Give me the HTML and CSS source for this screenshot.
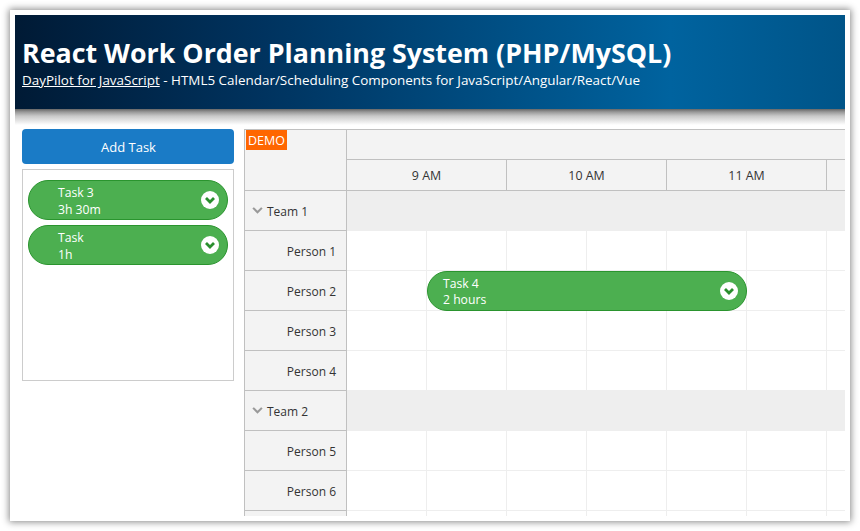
FILE: index.html
```html
<!DOCTYPE html>
<html lang="en">
<head>
<meta charset="utf-8">
<title>React Work Order Planning System (PHP/MySQL)</title>
<link rel="stylesheet" href="styles.css">
</head>
<body>
<div class="window">
  <header class="banner">
    <h1 class="title">React Work Order Planning System (PHP/MySQL)</h1>
    <p class="subtitle"><a class="link" href="#">DayPilot for JavaScript</a> - HTML5 Calendar/Scheduling Components for JavaScript/Angular/React/Vue</p>
  </header>
  <main class="main">
    <aside class="side">
      <button class="add">Add Task</button>
      <div class="queue">
        <div class="task queue-task">
          <div class="task-text"><div>Task 3</div><div>3h 30m</div></div>
          <svg class="chev" viewBox="0 0 18 18"><circle cx="9" cy="9" r="9" fill="#fff"/><path d="M5 7l4 4 4-4" fill="none" stroke="#2a8f2e" stroke-width="2.8"/></svg>
        </div>
        <div class="task queue-task">
          <div class="task-text"><div>Task</div><div>1h</div></div>
          <svg class="chev" viewBox="0 0 18 18"><circle cx="9" cy="9" r="9" fill="#fff"/><path d="M5 7l4 4 4-4" fill="none" stroke="#2a8f2e" stroke-width="2.8"/></svg>
        </div>
      </div>
    </aside>
    <section class="scheduler">
      <div class="corner"><span class="demo">DEMO</span></div>
      <div class="timehead">
        <div class="head-top"></div>
        <div class="head-hours">
          <div class="hour">9 AM</div>
          <div class="hour">10 AM</div>
          <div class="hour">11 AM</div>
          <div class="hour"></div>
        </div>
      </div>
      <div class="rows">
        <div class="row"><div class="label group"><svg class="caret" viewBox="0 0 12 8"><path d="M1 1l5 5 5-5" fill="none" stroke="#999" stroke-width="2.4"/></svg>Team 1</div><div class="cells group-cells"></div></div>
        <div class="row"><div class="label">Person 1</div><div class="cells"></div></div>
        <div class="row"><div class="label">Person 2</div><div class="cells">
          <div class="task event">
            <div class="task-text"><div>Task 4</div><div>2 hours</div></div>
            <svg class="chev" viewBox="0 0 18 18"><circle cx="9" cy="9" r="9" fill="#fff"/><path d="M5 7l4 4 4-4" fill="none" stroke="#2a8f2e" stroke-width="2.8"/></svg>
          </div>
        </div></div>
        <div class="row"><div class="label">Person 3</div><div class="cells"></div></div>
        <div class="row"><div class="label">Person 4</div><div class="cells"></div></div>
        <div class="row"><div class="label group"><svg class="caret" viewBox="0 0 12 8"><path d="M1 1l5 5 5-5" fill="none" stroke="#999" stroke-width="2.4"/></svg>Team 2</div><div class="cells group-cells"></div></div>
        <div class="row"><div class="label">Person 5</div><div class="cells"></div></div>
        <div class="row"><div class="label">Person 6</div><div class="cells"></div></div>
        <div class="row"><div class="label"></div><div class="cells"></div></div>
      </div>
    </section>
  </main>
</div>
</body>
</html>
```
FILE: styles.css
```css
html, body {
  margin: 0;
  height: 100%;
  background: #fff;
  overflow: hidden;
}
body {
  padding: 10px;
  box-sizing: border-box;
  font-family: "Open Sans", "Noto Sans", sans-serif;
}
.window {
  width: 840px;
  height: 511px;
  box-sizing: border-box;
  padding: 5px;
  background: #fff;
  box-shadow: 0 0 7px 1px #888;
  overflow: hidden;
}
.banner {
  position: relative;
  height: 94px;
  box-sizing: border-box;
  padding: 22px 7px 0;
  color: #fff;
  background: linear-gradient(to right, #001a35 0%, #00335f 30%, #00639f 79%, #005488 100%);
}
.banner::after {
  content: "";
  position: absolute;
  left: 0;
  right: 0;
  top: 100%;
  height: 16px;
  background: linear-gradient(#666 0, #999 3px, #c8c8c8 7px, #fff 16px);
}
.title {
  margin: 0;
  font-size: 26.8px;
  line-height: 32px;
  font-weight: 700;
  white-space: nowrap;
}
.subtitle {
  margin: 0;
  font-size: 13.45px;
  line-height: 22px;
  white-space: nowrap;
}
.link {
  color: #fff;
}
.main {
  display: flex;
  padding: 20px 0 0 7px;
  gap: 10px;
}
.side {
  width: 212px;
  flex: none;
}
.add {
  display: block;
  width: 212px;
  height: 35px;
  padding: 0 0 0 1px;
  border: 0;
  border-radius: 4px;
  background: #1a7bc6;
  color: #fff;
  font: 13px "Open Sans", sans-serif;
}
.queue {
  height: 212px;
  margin-top: 5px;
  padding: 10px 5px 0;
  box-sizing: border-box;
  border: 1px solid #ccc;
  display: flex;
  flex-direction: column;
  gap: 5px;
}
.task {
  display: flex;
  align-items: center;
  justify-content: space-between;
  box-sizing: border-box;
  height: 40px;
  padding: 0 8px 0 15px;
  background: #4caf50;
  border: 1px solid #2a942e;
  border-radius: 20px;
  color: #fff;
  font-size: 12.2px;
  line-height: 16px;
}
.task-text {
  padding-top: 2px;
}
.queue-task {
  line-height: 17px;
}
.queue-task .task-text {
  padding-left: 14px;
}
.chev {
  width: 18px;
  height: 18px;
  flex: none;
}
.scheduler {
  width: 601px;
  flex: none;
  height: 387px;
  overflow: hidden;
  display: grid;
  grid-template-columns: 103px 1fr;
  grid-template-rows: 61px 1fr;
  box-sizing: border-box;
  border-top: 1px solid #c0c0c0;
  font-size: 12px;
  color: #333;
}
.corner {
  background: #f3f3f3;
  border-left: 1px solid #c0c0c0;
  border-right: 1px solid #c0c0c0;
  border-bottom: 1px solid #c0c0c0;
  box-sizing: border-box;
}
.demo {
  display: block;
  width: 41px;
  height: 20px;
  margin-left: 1px;
  background: #ff6600;
  color: #fff;
  font-size: 12.5px;
  line-height: 22px;
  text-align: center;
}
.timehead {
  background: #f3f3f3;
  border-bottom: 1px solid #c0c0c0;
  box-sizing: border-box;
  min-width: 0;
}
.head-top {
  height: 30px;
  box-sizing: border-box;
  border-bottom: 1px solid #c0c0c0;
}
.head-hours {
  display: flex;
  height: 30px;
}
.hour {
  flex: 0 0 160px;
  box-sizing: border-box;
  border-right: 1px solid #c0c0c0;
  padding-top: 1px;
  text-align: center;
  font-size: 12.4px;
  line-height: 30px;
}
.rows {
  grid-column: 1 / 3;
}
.row {
  display: flex;
  height: 40px;
}
.label {
  flex: 0 0 103px;
  box-sizing: border-box;
  background: #f3f3f3;
  border-left: 1px solid #c0c0c0;
  border-right: 1px solid #c0c0c0;
  border-bottom: 1px solid #c0c0c0;
  text-align: right;
  padding: 1px 10px 0 0;
  line-height: 40px;
}
.label.group {
  text-align: left;
  padding: 1px 0 0 7px;
}
.caret {
  width: 11px;
  height: 7px;
  margin-right: 4px;
  vertical-align: 2px;
}
.cells {
  flex: 1;
  position: relative;
  box-sizing: border-box;
  border-bottom: 1px solid #eee;
  background: repeating-linear-gradient(to right, #fff 0, #fff 79px, #eee 79px, #eee 80px);
}
.group-cells {
  background: #eee;
  border-bottom: 0;
}
.event {
  position: absolute;
  left: 80px;
  top: 0;
  width: 320px;
}
```
